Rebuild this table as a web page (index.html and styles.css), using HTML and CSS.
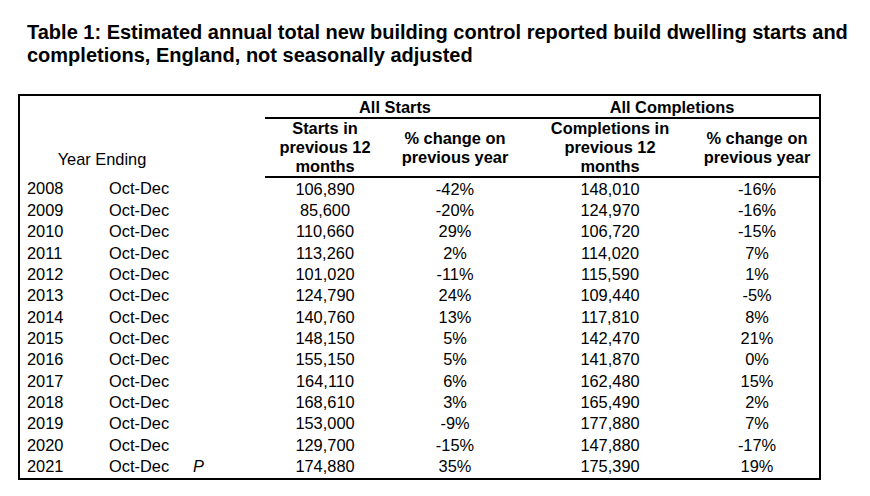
FILE: index.html
```html
<!DOCTYPE html>
<html lang="en">
<head>
<meta charset="utf-8">
<title>Table 1</title>
<link rel="stylesheet" href="styles.css">
</head>
<body>
<h1 class="title">Table 1: Estimated annual total new building control reported build dwelling starts and<br>completions, England, not seasonally adjusted</h1>
<div class="frame">
<table class="data">
<colgroup>
<col class="c-year"><col class="c-period"><col class="c-flag"><col class="c-starts"><col class="c-pct1"><col class="c-comp"><col class="c-pct2">
</colgroup>
<thead>
<tr class="group-row">
<th class="year-head" colspan="2" rowspan="2">Year Ending</th>
<th class="blank" rowspan="2"></th>
<th class="group" colspan="2">All Starts</th>
<th class="group" colspan="2">All Completions</th>
</tr>
<tr class="sub-row">
<th class="sub">Starts in<br>previous 12<br>months</th>
<th class="sub">% change on<br>previous year</th>
<th class="sub">Completions in<br>previous 12<br>months</th>
<th class="sub">% change on<br>previous year</th>
</tr>
</thead>
<tbody>
<tr><td class="yr">2008</td><td class="per">Oct-Dec</td><td class="flag"></td><td class="num">106,890</td><td class="num">-42%</td><td class="num">148,010</td><td class="num">-16%</td></tr>
<tr><td class="yr">2009</td><td class="per">Oct-Dec</td><td class="flag"></td><td class="num">85,600</td><td class="num">-20%</td><td class="num">124,970</td><td class="num">-16%</td></tr>
<tr><td class="yr">2010</td><td class="per">Oct-Dec</td><td class="flag"></td><td class="num">110,660</td><td class="num">29%</td><td class="num">106,720</td><td class="num">-15%</td></tr>
<tr><td class="yr">2011</td><td class="per">Oct-Dec</td><td class="flag"></td><td class="num">113,260</td><td class="num">2%</td><td class="num">114,020</td><td class="num">7%</td></tr>
<tr><td class="yr">2012</td><td class="per">Oct-Dec</td><td class="flag"></td><td class="num">101,020</td><td class="num">-11%</td><td class="num">115,590</td><td class="num">1%</td></tr>
<tr><td class="yr">2013</td><td class="per">Oct-Dec</td><td class="flag"></td><td class="num">124,790</td><td class="num">24%</td><td class="num">109,440</td><td class="num">-5%</td></tr>
<tr><td class="yr">2014</td><td class="per">Oct-Dec</td><td class="flag"></td><td class="num">140,760</td><td class="num">13%</td><td class="num">117,810</td><td class="num">8%</td></tr>
<tr><td class="yr">2015</td><td class="per">Oct-Dec</td><td class="flag"></td><td class="num">148,150</td><td class="num">5%</td><td class="num">142,470</td><td class="num">21%</td></tr>
<tr><td class="yr">2016</td><td class="per">Oct-Dec</td><td class="flag"></td><td class="num">155,150</td><td class="num">5%</td><td class="num">141,870</td><td class="num">0%</td></tr>
<tr><td class="yr">2017</td><td class="per">Oct-Dec</td><td class="flag"></td><td class="num">164,110</td><td class="num">6%</td><td class="num">162,480</td><td class="num">15%</td></tr>
<tr><td class="yr">2018</td><td class="per">Oct-Dec</td><td class="flag"></td><td class="num">168,610</td><td class="num">3%</td><td class="num">165,490</td><td class="num">2%</td></tr>
<tr><td class="yr">2019</td><td class="per">Oct-Dec</td><td class="flag"></td><td class="num">153,000</td><td class="num">-9%</td><td class="num">177,880</td><td class="num">7%</td></tr>
<tr><td class="yr">2020</td><td class="per">Oct-Dec</td><td class="flag"></td><td class="num">129,700</td><td class="num">-15%</td><td class="num">147,880</td><td class="num">-17%</td></tr>
<tr><td class="yr">2021</td><td class="per">Oct-Dec</td><td class="flag">P</td><td class="num">174,880</td><td class="num">35%</td><td class="num">175,390</td><td class="num">19%</td></tr>
</tbody>
</table>
</div>
</body>
</html>
```

FILE: styles.css
```css
html, body {
  margin: 0;
  padding: 0;
  background: #ffffff;
}

body {
  font-family: "Liberation Sans", Arial, sans-serif;
  color: #000000;
}

.title {
  margin: 21px 0 0 27px;
  font-size: 20px;
  line-height: 23px;
  font-weight: bold;
  white-space: nowrap;
}

.frame {
  margin: 27px 0 0 18px;
  width: 803px;
  box-sizing: border-box;
  border: 2px solid #000000;
  padding-bottom: 1px;
}

.data {
  width: 799px;
  border-collapse: collapse;
  table-layout: fixed;
  font-size: 16.4px;
}

.c-year { width: 80px; }
.c-period { width: 84px; }
.c-flag { width: 81px; }
.c-starts { width: 120px; }
.c-pct1 { width: 140px; }
.c-comp { width: 170px; }
.c-pct2 { width: 124px; }

.data th,
.data td {
  padding: 0;
}

.group-row th.group {
  height: 21px;
  font-weight: bold;
  text-align: center;
  vertical-align: middle;
  line-height: 20px;
  border-bottom: 2px solid #000000;
}

.data th.year-head {
  font-weight: normal;
  text-align: center;
  vertical-align: bottom;
  padding-bottom: 9px;
  line-height: 18px;
}

.sub-row th.sub {
  height: 56px;
  font-weight: bold;
  text-align: center;
  vertical-align: middle;
  line-height: 19px;
  border-bottom: 2px solid #000000;
}

.data tbody td {
  height: 21.33px;
  line-height: 20px;
  vertical-align: middle;
  white-space: nowrap;
}

.data td.yr {
  padding-left: 7px;
}

.data td.per {
  padding-left: 9px;
}

.data td.flag {
  padding-left: 9px;
  font-style: italic;
}

.num {
  text-align: center;
}
```
